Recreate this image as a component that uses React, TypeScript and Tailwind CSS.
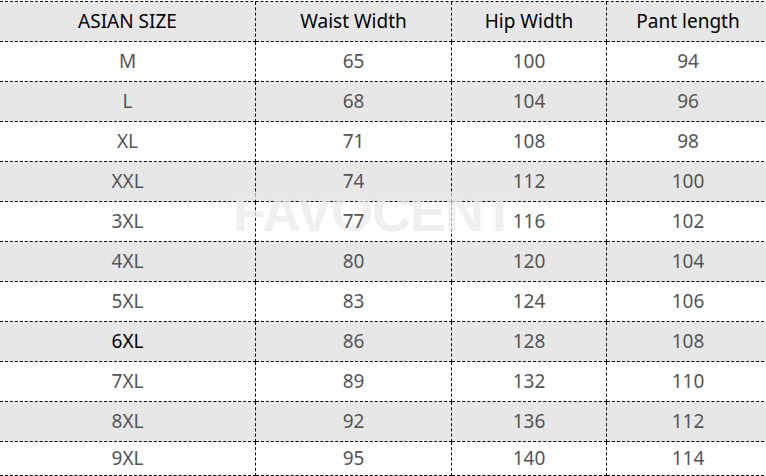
const header = ['ASIAN SIZE', 'Waist Width', 'Hip Width', 'Pant length'];

const rows = [
  ['M', '65', '100', '94'],
  ['L', '68', '104', '96'],
  ['XL', '71', '108', '98'],
  ['XXL', '74', '112', '100'],
  ['3XL', '77', '116', '102'],
  ['4XL', '80', '120', '104'],
  ['5XL', '83', '124', '106'],
  ['6XL', '86', '128', '108'],
  ['7XL', '89', '132', '110'],
  ['8XL', '92', '136', '112'],
  ['9XL', '95', '140', '114'],
];

const cols = 'grid grid-cols-[256px_196px_155px_162px]';

const Cell = ({ text, dark, last }: { text: string; dark?: boolean; last?: boolean }) => (
  <div
    className={`flex items-center justify-center border-b border-dashed border-black ${last ? '' : 'border-r'}`}
  >
    <span className={`relative z-[2] ${dark ? 'text-black' : 'text-[#555555]'}`}>{text}</span>
  </div>
);

export default function App() {
  return (
    <div className="relative h-[476px] w-[766px] overflow-hidden bg-white font-['Noto_Sans',sans-serif] text-[19px]">
      <div className="mt-px w-[769px] border-t border-dashed border-black">
        <div className={`${cols} h-10 bg-[#e8e7e8]`}>
          {header.map((h, i) => (
            <Cell key={h} text={h} dark last={i === 3} />
          ))}
        </div>
        {rows.map((r, ri) => (
          <div
            key={r[0]}
            className={`${cols} ${ri === rows.length - 1 ? 'h-[34px]' : 'h-10'} ${ri % 2 === 1 ? 'bg-[#e8e7e8]' : 'bg-white'}`}
          >
            {r.map((c, ci) => (
              <Cell key={ci} text={c} dark={r[0] === '6XL' && ci === 0} last={ci === 3} />
            ))}
          </div>
        ))}
      </div>
      <div className="pointer-events-none absolute left-[233px] top-[172px] z-[1] font-['Liberation_Sans',sans-serif] text-[54px] font-bold tracking-[-1px] text-[rgba(234,234,234,0.72)]">
        FAVOCENT
      </div>
    </div>
  );
}
